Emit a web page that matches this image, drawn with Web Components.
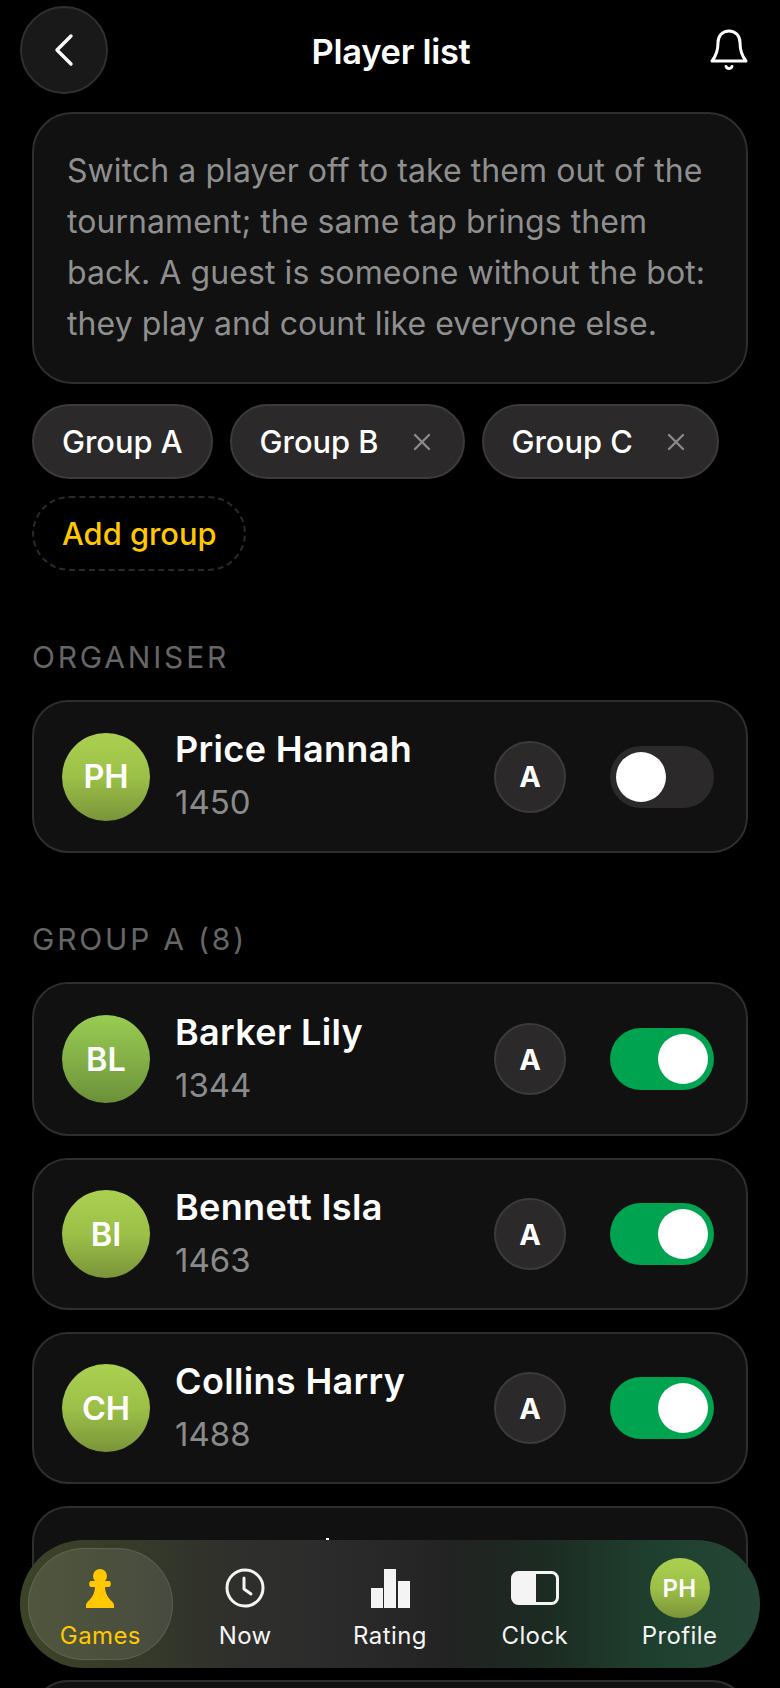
<!DOCTYPE html>
<html lang="en"><head><meta charset="utf-8"><title>Player list</title>
<style>
html,body{margin:0;background:#000;}
body{width:780px;height:1688px;overflow:hidden;font-family:Inter,"Noto Sans",sans-serif;color:#fff;}
</style></head><body>
<app-screen>
  <app-header slot="header" title="Player list"></app-header>
  <info-card>Switch a player off to take them out of the tournament; the same tap brings them back. A guest is someone without the bot: they play and count like everyone else.</info-card>
  <chip-row>
    <group-chip>Group A</group-chip>
    <group-chip removable>Group B</group-chip>
    <group-chip removable>Group C</group-chip>
    <group-chip add>Add group</group-chip>
  </chip-row>
  <section-label style="margin-top:69px;margin-bottom:26px">ORGANISER</section-label>
  <player-row style="height:153px" name="Price Hannah" initials="PH" rating="1450" group="A"></player-row>
  <section-label style="margin-top:47px;margin-bottom:26px">GROUP A (8)</section-label>
  <player-row style="height:154px;--a:#98cc52;--m:#84b048;--z:#6a9038" name="Barker Lily" initials="BL" rating="1344" group="A" on></player-row>
  <player-row name="Bennett Isla" initials="BI" rating="1463" group="A" on></player-row>
  <player-row name="Collins Harry" initials="CH" rating="1488" group="A" on></player-row>
  <player-row empty tip></player-row>
  <player-row empty></player-row>
  <bottom-nav slot="nav"></bottom-nav>
</app-screen>
<script>
function def(name, css, html){
  customElements.define(name, class extends HTMLElement{
    connectedCallback(){
      if(this.shadowRoot) return;
      const r=this.attachShadow({mode:'open'});
      r.innerHTML='<style>'+css+'</style>'+(typeof html==='function'?html(this):html);
    }
  });
}
const attr=(e,n)=>e.getAttribute(n)||'';
def('app-screen',`
  :host{display:block;position:relative;width:780px;height:1688px;overflow:hidden;background:#000}
  main{display:flex;flex-direction:column;padding:0 32px}
`,`<slot name="header"></slot><main><slot></slot></main><slot name="nav"></slot>`);
def('app-header',`
  :host{display:flex;align-items:center;height:88px;padding:6px 20px 18px 20px}
  button{all:unset;box-sizing:border-box;flex:none;width:88px;height:88px;border-radius:50%;background:#191919;border:2px solid #303030;display:flex;align-items:center;justify-content:center}
  h1{flex:1;margin:0;padding:3px 0 0 2px;font-size:34.500px;font-weight:600;line-height:44px;letter-spacing:-.3px;color:#fff;text-align:center}
  .r{flex:none;width:88px;display:flex;justify-content:flex-end;padding-right:12px;box-sizing:border-box}
  svg{display:block}
`,e=>`<button aria-label="Back"><svg width="24" height="36" viewBox="0 0 24 36" fill="none" stroke="#fff" stroke-width="3.400" stroke-linecap="round" stroke-linejoin="round"><path d="M19 4 5 18l14 14"/></svg></button>
  <h1>${attr(e,'title')}</h1>
  <div class="r"><svg width="38" height="42" viewBox="0 0 38 42" fill="none" stroke="#fff" stroke-width="3" stroke-linecap="round" stroke-linejoin="round"><path d="M19 2c-6.600 0-11 5-11 11.500 0 8-1.500 13-6 18.500h34c-4.500-5.500-6-10.500-6-18.500C30 7 25.600 2 19 2Z"/><path d="M16 37.500c1 2.600 5 2.600 6 0"/></svg></div>`);
def('info-card',`
  :host{display:block;box-sizing:border-box;height:272px;background:#111;border:2px solid #2e2e2e;border-radius:40px;padding:31px 28px 0 33px;font-size:32px;line-height:51px;letter-spacing:.07px;color:#8f8f8f;font-weight:400}
`,`<slot></slot>`);
def('chip-row',`:host{display:flex;flex-wrap:wrap;gap:17px;margin-top:20px}`,`<slot></slot>`);
def('group-chip',`
  :host{display:inline-flex;box-sizing:border-box;align-items:center;height:75px;padding:0 28px;background:#2b2929;border:2px solid #3b3b3b;border-radius:38px;font-size:30.800px;font-weight:500;color:#fff}
  :host([add]){background:transparent;border:2px dashed #2a2a2a;color:#ffc800}
  svg{display:block;margin:0 4px 0 34px}
`,e=>`<slot></slot>`+(e.hasAttribute('removable')?`<svg width="18" height="18" viewBox="0 0 18 18" stroke="#8a8a8a" stroke-width="2.400" stroke-linecap="round"><path d="M2 2l14 14M16 2 2 16"/></svg>`:''));
def('section-label',`
  :host{display:block;font-size:30px;line-height:34px;font-weight:400;letter-spacing:2.800px;color:#666}
`,`<slot></slot>`);
def('player-avatar',`
  :host{display:flex;flex:none;align-items:center;justify-content:center;width:var(--s,88px);height:var(--s,88px);border-radius:50%;background:linear-gradient(180deg,var(--a,#abd050) 0%,var(--m,#9cc048) 50%,var(--z,#7a943a) 100%);font-size:var(--f,32.500px);font-weight:600;color:#fff}
`,`<slot></slot>`);
def('toggle-switch',`
  :host{display:flex;flex:none;box-sizing:border-box;width:104px;height:62px;border-radius:31px;background:#2b2929;padding:6px;justify-content:flex-start}
  :host([on]){background:#00a34f;justify-content:flex-end}
  i{display:block;width:50px;height:50px;border-radius:50%;background:#fff}
`,`<i></i>`);
def('player-row',`
  :host{display:flex;position:relative;box-sizing:border-box;align-items:center;height:152px;margin-bottom:22px;background:#111;border:2px solid #2e2e2e;border-radius:36px;padding:0 32px 0 28px}
  .t{flex:1;margin-left:25px;min-width:0}
  .n{font-size:36px;line-height:44px;font-weight:600;color:#fff;letter-spacing:.35px;margin-top:-4px}
  .r{font-size:33px;line-height:40px;color:#8a8a8a;margin-top:11px}
  .b{flex:none;box-sizing:border-box;width:72px;height:72px;border-radius:50%;background:#2b2929;border:2px solid #3b3b3b;display:flex;align-items:center;justify-content:center;font-size:29px;font-weight:700;color:#fff;margin-right:44px}
  .tip{position:absolute;left:292px;top:30px;width:3px;height:2px;background:#fff}
`,e=>e.hasAttribute('empty')?(e.hasAttribute('tip')?'<span class="tip"></span>':''):`<player-avatar>${attr(e,'initials')}</player-avatar>
  <div class="t"><div class="n">${attr(e,'name')}</div><div class="r">${attr(e,'rating')}</div></div>
  <div class="b">${attr(e,'group')}</div>
  <toggle-switch ${e.hasAttribute('on')?'on':''}></toggle-switch>`);
def('bottom-nav',`
  :host{position:absolute;left:20px;top:1540px;width:740px;height:128px;box-sizing:border-box;padding:8px;border-radius:64px;display:flex;
    background:linear-gradient(90deg,#3c4427 0%,#363b29 15%,#2f302c 28%,#2c2c2c 40%,#222322 58%,#1c2a22 70%,#1f3f2e 85%,#254536 100%)}
`,`<nav-item active label="Games"><svg width="30" height="40" viewBox="0 0 30 40" fill="#ffc800"><circle cx="15" cy="8" r="7"/><path d="M6 13h18c1.200 0 1.800 1.200 1.800 2.800S25.200 19 24 19h-4c.3 6 2.400 10.500 7.500 15 1.400 1.200 1.500 2.500 1.500 4v2H1v-2c0-1.500.1-2.800 1.500-4C7.600 29.500 9.700 25 10 19H6c-1.200 0-1.800-1.600-1.800-3.200S4.800 13 6 13Z"/></svg></nav-item>
<nav-item label="Now"><svg width="40" height="40" viewBox="0 0 40 40" fill="none" stroke="#f4f4f4" stroke-width="3" stroke-linecap="round" stroke-linejoin="round"><circle cx="20" cy="20" r="18"/><path d="M19 10v11l7 5"/></svg></nav-item>
<nav-item label="Rating"><svg width="40" height="40" viewBox="0 0 40 40" fill="#f4f4f4"><rect x="1" y="20" width="12" height="20"/><rect x="14" y="1" width="12" height="39"/><rect x="28" y="13" width="12" height="27"/></svg></nav-item>
<nav-item label="Clock"><svg width="48" height="34" viewBox="0 0 48 34" fill="none"><rect x="1.500" y="1.500" width="45" height="31" rx="6" stroke="#f4f4f4" stroke-width="3"/><path d="M7 1h18v32H7a6 6 0 0 1-6-6V7a6 6 0 0 1 6-6Z" fill="#f4f4f4"/></svg></nav-item>
<nav-item label="Profile"><player-avatar style="--s:60px;--f:24px">PH</player-avatar></nav-item>`);
def('nav-item',`
  :host{flex:1;box-sizing:border-box;position:relative;display:flex;flex-direction:column;align-items:center;border-radius:56px;border:1px solid transparent;color:#f4f4f4;font-size:24px;font-weight:400;letter-spacing:.4px}
  :host([active]){background:rgba(255,255,255,.1);border-color:rgba(255,255,255,.1);color:#ffc800}
  .i{height:60px;margin-top:9px;display:flex;align-items:center;justify-content:center}
  .l{line-height:30px;margin-top:3px}
`,e=>`<div class="i"><slot></slot></div><div class="l">${attr(e,'label')}</div>`);
</script>
</body></html>
